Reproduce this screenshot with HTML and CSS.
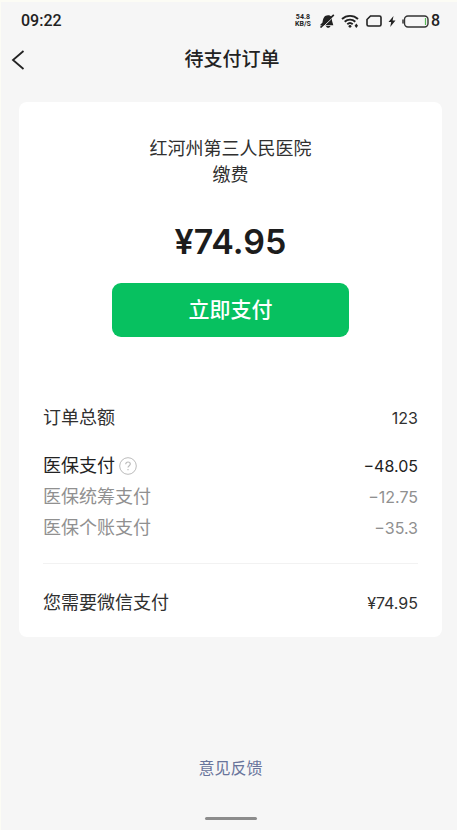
FILE: index.html
```html
<!DOCTYPE html>
<html lang="zh-CN">
<head>
<meta charset="utf-8">
<meta name="viewport" content="width=device-width, initial-scale=1">
<title>待支付订单</title>
<link rel="stylesheet" href="styles.css">
</head>
<body>
<div class="screen">
  <div class="status">
    <time class="clock">09:22</time>
    <div class="indicators">
      <div class="speed"><span>54.8</span><span>KB/S</span></div>
      <svg class="bell" width="16" height="14" viewBox="0 0 16 14" aria-hidden="true">
        <path d="M.8 11.300 3.500 8.500C4 4 5.500 1.200 9 1.200c3.500 0 4.300 2.600 4 5.600l1.300 4.500zM7 12h4.500c-.4 1.200-1.200 1.800-2.300 1.800S7.300 13.200 7 12z" fill="#222"/>
        <path d="M3.300 13.600 15.300 2.100" stroke="#f6f6f6" stroke-width="1"/>
        <path d="M1.500 13.500 14.800 .8" stroke="#222" stroke-width="1.700"/>
      </svg>
      <svg class="wifi" width="18" height="14" viewBox="0 0 18 14" fill="none" stroke="#222" stroke-width="1.900" aria-hidden="true">
        <path d="M1 5C5.500.8 12.500.8 17 5M3.700 7.800c3-2.900 7.600-2.900 10.600 0M6.300 10.300c1.600-1.500 3.800-1.500 5.400 0"/>
        <circle cx="9" cy="12.300" r="1.400" fill="#222" stroke="none"/>
        <path d="m15.300 9.600 1.700 2.200-1.700 2.200-1.700-2.200z" fill="#222" stroke="none"/>
      </svg>
      <svg class="sim" width="16" height="12" viewBox="0 0 16 12" fill="none" stroke="#222" stroke-width="1.600" aria-hidden="true">
        <path d="M4.500 1H13.500Q15 1 15 2.500V9.500Q15 11 13.500 11H2.500Q1 11 1 9.500V4.500z"/>
      </svg>
      <svg class="bolt" width="8" height="11" viewBox="0 0 8 11" aria-hidden="true">
        <path d="M5.500 0 .5 6h2.700l-1 5L7.500 4.500H4.600z" fill="#222"/>
      </svg>
      <svg class="battery" width="27" height="13" viewBox="0 0 27 13" fill="none" aria-hidden="true">
        <rect x="2.500" y="1" width="23.500" height="11" rx="3.500" stroke="#333" stroke-width="1.400"/>
        <path d="M1 4.500v4" stroke="#333" stroke-width="1.500"/>
        <path d="M23.500 3v7" stroke="#58b957" stroke-width="1.200"/>
      </svg>
      <span class="charge">8</span>
    </div>
  </div>
  <header class="nav">
    <button class="back" type="button" aria-label="返回">
      <svg width="14" height="20" viewBox="0 0 14 20" fill="none" stroke="#222" stroke-width="1.800" aria-hidden="true"><path d="M12.500 1 2 10l10.500 9"/></svg>
    </button>
    <h1 class="title">待支付订单</h1>
  </header>
  <main class="card">
    <p class="payee">红河州第三人民医院<br>缴费</p>
    <p class="amount">¥74.95</p>
    <button class="pay" type="button">立即支付</button>
    <dl class="details">
      <div class="row"><dt>订单总额</dt><dd>123</dd></div>
      <div class="row insurance">
        <dt>医保支付
          <button class="help" type="button" aria-label="医保支付说明">
            <svg width="18" height="18" viewBox="0 0 18 18" fill="none" stroke="#bbb" aria-hidden="true">
              <circle cx="9" cy="9" r="8.300"/>
              <path d="M6.700 7.200C6.700 5.800 7.700 5 9 5s2.300.8 2.300 2c0 1.700-2.300 1.700-2.300 3.600M9 12v1.300" stroke-width="1.200"/>
            </svg>
          </button>
        </dt><dd>−48.05</dd></div>
      <div class="row sub"><dt>医保统筹支付</dt><dd>−12.75</dd></div>
      <div class="row sub"><dt>医保个账支付</dt><dd>−35.3</dd></div>
      <div class="row total"><dt>您需要微信支付</dt><dd>¥74.95</dd></div>
    </dl>
  </main>
  <footer class="footer">
    <a class="feedback" href="#">意见反馈</a>
    <div class="handle"></div>
  </footer>
</div>
</body>
</html>
```
FILE: styles.css
```css
* { box-sizing: border-box; }

body {
  margin: 0;
  background: #f6f6f6;
  color: #303030;
  font-family: Inter, "Noto Sans CJK SC", sans-serif;
  font-size: 18px;
  line-height: 26px;
}

button {
  border: 0;
  padding: 0;
  background: none;
  font: inherit;
}

.screen {
  display: flex;
  flex-direction: column;
  min-height: 100vh;
  border-top: 2px solid #fcfcf5;
  border-left: 1px solid #fcfcf5;
}

.status {
  display: flex;
  justify-content: space-between;
  align-items: center;
  height: 38px;
  padding: 0 17px 0 20px;
  font-family: Roboto, sans-serif;
  font-weight: 500;
  color: #222;
}

.clock { font-size: 16px; }

.indicators {
  display: flex;
  align-items: center;
}

.speed {
  display: flex;
  flex-direction: column;
  width: 20px;
  margin-right: 6px;
  font-size: 7px;
  font-weight: 700;
  line-height: 7px;
  text-align: center;
}

.bell { margin-right: 6px; }
.wifi { margin-right: 7px; }
.sim { margin-right: 6px; }
.bolt { margin-right: 6px; }
.battery { margin-right: 2px; }
.charge { font-size: 16px; }

.nav {
  display: grid;
  grid-template-columns: 40px 1fr 40px;
  align-items: center;
  height: 40px;
  padding-left: 6px;
}

.back {
  display: flex;
  padding: 4px;
}

.title {
  margin: 0;
  color: #222;
  font-size: 19px;
  font-weight: 500;
  text-align: center;
}

.card {
  display: flex;
  flex-direction: column;
  align-items: center;
  margin: 22px 15px 0 18px;
  padding: 34px 24px 22px;
  border-radius: 8px;
  background: #fff;
}

.payee {
  margin: 0;
  text-align: center;
}

.amount {
  margin: 29px 0 0;
  color: #1c1c1c;
  font-size: 34px;
  font-weight: 600;
  line-height: 50px;
}

.pay {
  width: 63%;
  height: 54px;
  margin-top: 16px;
  border-radius: 9px;
  background: #07c160;
  color: #fff;
  font-size: 21px;
  font-weight: 500;
}

.details {
  width: 100%;
  margin: 66px 0 0;
}

.row {
  display: flex;
  justify-content: space-between;
  align-items: center;
  height: 30px;
}

.row dt {
  display: flex;
  align-items: center;
  gap: 4px;
}

.row dd {
  margin: 0;
  font-size: 16px;
}

.help { display: flex; }

.insurance {
  margin-top: 18px;
  color: #222;
}

.sub {
  height: 31px;
  color: #909090;
}

.total {
  height: 52px;
  margin-top: 20px;
  padding-top: 26px;
  border-top: 1px solid #f2f2f2;
}

.footer {
  display: flex;
  flex: 1;
  flex-direction: column;
  align-items: center;
  justify-content: flex-end;
  margin: 0 15px 0 18px;
  padding: 24px 0 10px;
}

.feedback {
  color: #68749b;
  font-size: 16px;
  text-decoration: none;
}

.handle {
  width: 52px;
  height: 3px;
  margin-top: 36px;
  border-radius: 2px;
  background: #8c8c8c;
}
```
